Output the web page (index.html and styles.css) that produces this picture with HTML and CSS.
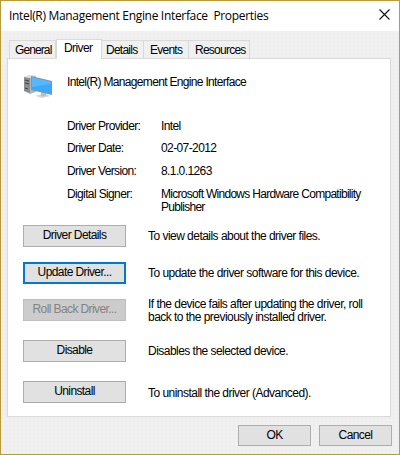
FILE: index.html
```html
<!DOCTYPE html>
<html lang="en">
<head>
<meta charset="utf-8">
<title>Intel(R) Management Engine Interface Properties</title>
<link rel="stylesheet" href="styles.css">
</head>
<body>
<main class="dialog">
  <header class="titlebar">
    <h1 class="title">Intel(R) Management Engine Interface&nbsp; Properties</h1>
    <svg class="close" width="11" height="11" viewBox="0 0 11 11"><path d="M.5.5l10 10M10.5.5l-10 10" stroke="#111" stroke-width="1.1" fill="none"/></svg>
  </header>
  <nav class="tabs">
    <span class="tab general">General</span>
    <span class="tab active">Driver</span>
    <span class="tab details">Details</span>
    <span class="tab events">Events</span>
    <span class="tab resources">Resources</span>
  </nav>
  <section class="panel">
    <div class="device">
      <svg class="device-icon" width="30" height="26" viewBox="0 0 30 26">
        <path d="M1 3l6-2 6 1v16l-6 2-6-3z" fill="#b5b8ba"/>
        <path d="M1 3l6 1v15l-6-2z" fill="#8b8f91"/>
        <path d="M1 3l6-2 6 1-6 2z" fill="#dddfe0"/>
        <path d="M2 6l4 1M2 9l4 1M2 14l3 1" stroke="#404446" fill="none"/>
        <path d="M13 22l8-3 6 3-8 2z" fill="#cfd4d8"/>
        <path d="M18 18h5v4h-5z" fill="#b9c0c4"/>
        <path d="M8 2l21 5v14L8 16z" fill="#8296a3"/>
        <path d="M9 3.300l19 4.500v12L9 15.200z" fill="#3ba9f8"/>
        <path d="M9 3.300l19 4.500v2L9 13z" fill="#55b8ff"/>
      </svg>
      <span class="device-name">Intel(R) Management Engine Interface</span>
    </div>
    <dl class="facts">
      <dt>Driver Provider:</dt><dd>Intel</dd>
      <dt>Driver Date:</dt><dd class="number">02-07-2012</dd>
      <dt>Driver Version:</dt><dd class="number">8.1.0.1263</dd>
      <dt>Digital Signer:</dt><dd class="signer">Microsoft Windows Hardware Compatibility<br>Publisher</dd>
    </dl>
    <div class="actions">
      <button class="btn">Driver Details</button><p>To view details about the driver files.</p>
      <button class="btn focus">Update Driver...</button><p>To update the driver software for this device.</p>
      <button class="btn" disabled>Roll Back Driver...</button><p class="two-line">If the device fails after updating the driver, roll<br>back to the previously installed driver.</p>
      <button class="btn">Disable</button><p>Disables the selected device.</p>
      <button class="btn">Uninstall</button><p class="last">To uninstall the driver (Advanced).</p>
    </div>
  </section>
  <footer class="footer">
    <button class="btn">OK</button>
    <button class="btn">Cancel</button>
  </footer>
</main>
</body>
</html>
```
FILE: styles.css
```css
* { box-sizing: border-box; }
body { margin: 0; font: 12px/13px "Liberation Sans", Arial, sans-serif; letter-spacing: -0.53px; color: #000; }
.dialog {
  width: 400px; height: 455px; border: 1px solid #b99b3c;
  background: #f0f0f0 radial-gradient(circle at 1px 1px, #ededed 0.7px, transparent 0.8px) 0 0 / 4px 4px;
}
.titlebar { height: 30px; background: #fff; display: flex; justify-content: space-between; padding: 0 9px 0 8px; }
.title { margin: 6px 0 0; font: 12px/18px "Open Sans", "Noto Sans", sans-serif; letter-spacing: -0.32px; white-space: nowrap; }
.close { margin-top: 8px; }
.tabs { display: flex; align-items: flex-end; height: 27px; padding-left: 8px; white-space: nowrap; letter-spacing: -0.75px; }
.tab { height: 18px; border: 1px solid #d9d9d9; border-width: 1px 1px 0 0; background: #f0f0f0; padding: 3px 0 0 5px; }
.general { width: 47px; border-left-width: 1px; letter-spacing: -0.9px; }
.active { position: relative; width: 46px; height: 20px; margin-bottom: -1px; border-left-width: 1px; background: #fff; padding: 2px 0 0 7px; letter-spacing: -0.6px; }
.details { width: 42px; padding-left: 4px; }
.events { width: 45px; padding-left: 6px; }
.resources { width: 61px; padding-left: 6px; }
.panel { width: 384px; height: 359px; margin-left: 6px; border: 1px solid #d9d9d9; background: #fff; }
.device { display: flex; height: 57px; padding: 15px 0 0 15px; }
.device-icon { flex: none; }
.device-name { margin: 2px 0 0 14px; white-space: nowrap; letter-spacing: -0.68px; }
.facts { display: grid; grid-template-columns: 94px 1fr; grid-template-rows: 22px 23px 23px 26px; margin: 4px 0 0 59px; white-space: nowrap; letter-spacing: -0.63px; }
.facts dd { margin: 0; }
.facts .number { letter-spacing: -0.6px; }
.facts .signer { letter-spacing: -0.71px; }
.actions { display: grid; grid-template-columns: 103px 1fr; grid-template-rows: 37px 37px 41px 41px 22px; column-gap: 22px; margin: 11px 0 0 15px; white-space: nowrap; }
.actions p { margin: 5px 0 0; }
.btn { font: inherit; letter-spacing: -0.6px; color: inherit; border: 1px solid #adadad; background: #e1e1e1; padding: 0 0 1px; height: 22px; border-radius: 0; }
.focus { border: 2px solid #0078d7; }
.btn:disabled { border-color: #bfbfbf; background: #ccc; color: #838383; }
.actions .two-line { margin-top: -1px; }
.actions .last { margin-top: 6px; }
.footer { display: flex; justify-content: flex-end; gap: 8px; padding: 8px 7px 0 0; }
.footer .btn { width: 73px; height: 21px; padding: 0; }
```
